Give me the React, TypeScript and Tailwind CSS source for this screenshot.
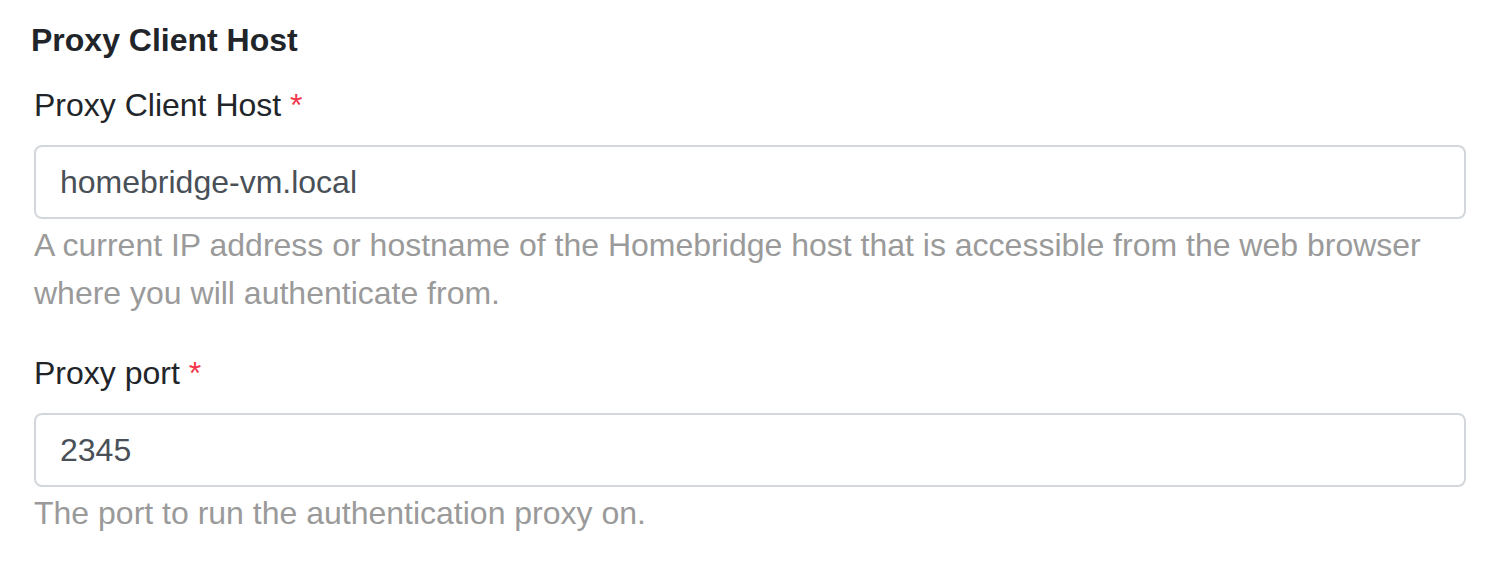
import React from "react";

const fields = [
  {
    label: "Proxy Client Host",
    value: "homebridge-vm.local",
    help: "A current IP address or hostname of the Homebridge host that is accessible from the web browser where you will authenticate from.",
  },
  {
    label: "Proxy port",
    value: "2345",
    help: "The port to run the authentication proxy on.",
  },
];

export default function App() {
  return (
    <div
      className="min-h-screen bg-white pt-[16px] pl-[34px] pr-[36px] text-[32px] leading-[48px] text-[#212529]"
      style={{ fontFamily: '"Liberation Sans", Arial, sans-serif' }}
    >
      {/* Section title */}
      <h5 className="-ml-[3px] mb-[17px] font-bold">Proxy Client Host</h5>

      {fields.map((f, i) => (
        <div key={i} className="mb-[32px]">
          <label className="mb-[16px] block">
            {f.label} <span className="text-[#f3344d]">*</span>
          </label>
          <div className="flex h-[74px] items-center rounded-[8px] border-2 border-[#d3d7dc] pl-[24px] text-[#495057]">
            {f.value}
          </div>
          <p className="mt-[2px] text-[#9a9a9a]">{f.help}</p>
        </div>
      ))}
    </div>
  );
}
